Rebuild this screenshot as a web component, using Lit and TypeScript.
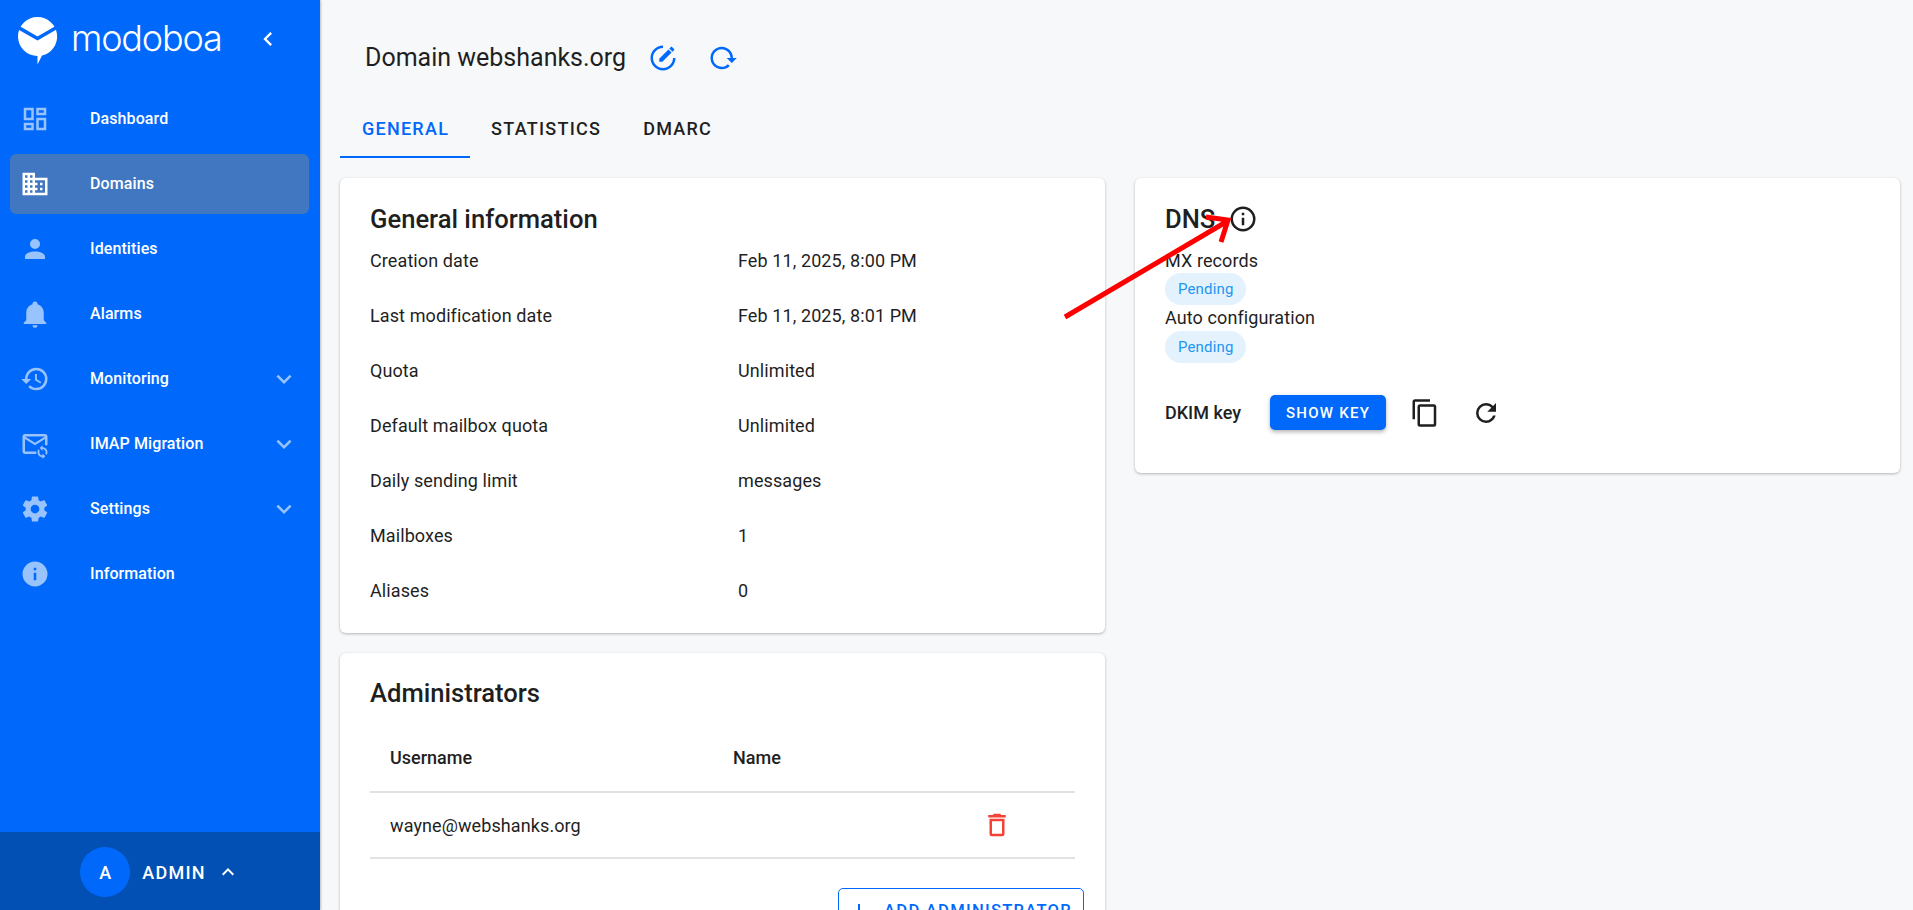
import { LitElement, css, html, svg } from 'lit'

const P = {
  dashboard: 'M19,5V7H15V5H19M9,5V11H5V5H9M19,13V19H15V13H19M9,17V19H5V17H9M21,3H13V9H21V3M11,3H3V13H11V3M21,11H13V21H21V11M11,15H3V21H11V15Z',
  domain: 'M18,15H16V17H18M18,11H16V13H18M20,19H12V17H14V15H12V13H14V11H12V9H20M10,7H8V5H10M10,11H8V9H10M10,15H8V13H10M10,19H8V17H10M6,7H4V5H6M6,11H4V9H6M6,15H4V13H6M6,19H4V17H6M12,7V3H2V21H22V7H12Z',
  account: 'M12,4A4,4 0 0,1 16,8A4,4 0 0,1 12,12A4,4 0 0,1 8,8A4,4 0 0,1 12,4M12,14C16.42,14 20,15.79 20,18V20H4V18C4,15.79 7.58,14 12,14Z',
  bell: 'M21,19V20H3V19L5,17V11C5,7.9 7.03,5.17 10,4.29C10,4.19 10,4.1 10,4A2,2 0 0,1 12,2A2,2 0 0,1 14,4C14,4.1 14,4.19 14,4.29C16.97,5.17 19,7.9 19,11V17L21,19M14,21A2,2 0 0,1 12,23A2,2 0 0,1 10,21',
  history: 'M13.5,8H12V13L16.28,15.54L17,14.33L13.5,12.25V8M13,3A9,9 0 0,0 4,12H1L4.96,16.03L9,12H6A7,7 0 0,1 13,5A7,7 0 0,1 20,12A7,7 0 0,1 13,19C11.07,19 9.32,18.21 8.06,16.94L6.64,18.36C8.27,20 10.5,21 13,21A9,9 0 0,0 22,12A9,9 0 0,0 13,3',
  emailSync: 'M22 6V13H20V8L12 13L4 8V18H13V20H4C2.9 20 2 19.1 2 18V6C2 4.9 2.9 4 4 4H20C21.1 4 22 4.9 22 6M20 6H4L12 11L20 6M18 14.5V13L15.75 15.25L18 17.5V16C19.38 16 20.5 17.12 20.5 18.5C20.5 18.9 20.41 19.28 20.24 19.62L21.33 20.71C21.75 20.08 22 19.32 22 18.5C22 16.29 20.21 14.5 18 14.5M18 21C16.62 21 15.5 19.88 15.5 18.5C15.5 18.1 15.59 17.72 15.76 17.38L14.67 16.29C14.25 16.92 14 17.68 14 18.5C14 20.71 15.79 22.5 18 22.5V24L20.25 21.75L18 19.5V21Z',
  cog: 'M12,15.5A3.5,3.5 0 0,1 8.5,12A3.5,3.5 0 0,1 12,8.5A3.5,3.5 0 0,1 15.5,12A3.5,3.5 0 0,1 12,15.5M19.43,12.97C19.47,12.65 19.5,12.33 19.5,12C19.5,11.67 19.47,11.34 19.43,11L21.54,9.37C21.73,9.22 21.78,8.95 21.66,8.73L19.66,5.27C19.54,5.05 19.27,4.96 19.05,5.05L16.56,6.05C16.04,5.66 15.5,5.32 14.87,5.07L14.5,2.42C14.46,2.18 14.25,2 14,2H10C9.75,2 9.54,2.18 9.5,2.42L9.13,5.07C8.5,5.32 7.96,5.66 7.44,6.05L4.95,5.05C4.73,4.96 4.46,5.05 4.34,5.27L2.34,8.73C2.21,8.95 2.27,9.22 2.46,9.37L4.57,11C4.53,11.34 4.5,11.67 4.5,12C4.5,12.33 4.53,12.65 4.57,12.97L2.46,14.63C2.27,14.78 2.21,15.05 2.34,15.27L4.34,18.73C4.46,18.95 4.73,19.03 4.95,18.95L7.44,17.94C7.96,18.34 8.5,18.68 9.13,18.93L9.5,21.58C9.54,21.82 9.75,22 10,22H14C14.25,22 14.46,21.82 14.5,21.58L14.87,18.93C15.5,18.67 16.04,18.34 16.56,17.94L19.05,18.95C19.27,19.03 19.54,18.95 19.66,18.73L21.66,15.27C21.78,15.05 21.73,14.78 21.54,14.63L19.43,12.97Z',
  info: 'M13,9H11V7H13M13,17H11V11H13M12,2A10,10 0 0,0 2,12A10,10 0 0,0 12,22A10,10 0 0,0 22,12A10,10 0 0,0 12,2Z',
  infoOutline: 'M11,9H13V7H11M12,20C7.59,20 4,16.41 4,12C4,7.59 7.59,4 12,4C16.41,4 20,7.59 20,12C20,16.41 16.41,20 12,20M12,2A10,10 0 0,0 2,12A10,10 0 0,0 12,22A10,10 0 0,0 22,12A10,10 0 0,0 12,2M11,17H13V11H11V17Z',
  down: 'M7.41,8.58L12,13.17L16.59,8.58L18,10L12,16L6,10L7.41,8.58Z',
  up: 'M7.41,15.41L12,10.83L16.59,15.41L18,14L12,8L6,14L7.41,15.41Z',
  left: 'M15.41,16.58L10.83,12L15.41,7.41L14,6L8,12L14,18L15.41,16.58Z',
  edit: 'M12 2C6.47 2 2 6.5 2 12C2 17.5 6.5 22 12 22S22 17.5 22 12H20C20 16.42 16.42 20 12 20C7.58 20 4 16.42 4 12C4 7.58 7.58 4 12 4V2M18.78 3C18.61 3 18.43 3.07 18.3 3.2L17.08 4.41L19.58 6.91L20.8 5.7C21.06 5.44 21.06 5 20.8 4.75L19.25 3.2C19.12 3.07 18.95 3 18.78 3M16.37 5.12L9 12.5V15H11.5L18.87 7.62L16.37 5.12Z',
  reload: 'M2 12C2 16.97 6.03 21 11 21C13.39 21 15.68 20.06 17.4 18.4L15.9 16.9C14.63 18.25 12.86 19 11 19C4.76 19 1.64 11.46 6.05 7.05C10.46 2.64 18 5.77 18 12H15L19 16H19.1L23 12H20C20 7.03 15.97 3 11 3C6.03 3 2 7.03 2 12Z',
  refresh: 'M17.65,6.35C16.2,4.9 14.21,4 12,4A8,8 0 0,0 4,12A8,8 0 0,0 12,20C15.73,20 18.84,17.45 19.73,14H17.65C16.83,16.33 14.61,18 12,18A6,6 0 0,1 6,12A6,6 0 0,1 12,6C13.66,6 15.14,6.69 16.22,7.78L13,11H20V4L17.65,6.35Z',
  copy: 'M19,21H8V7H19M19,5H8A2,2 0 0,0 6,7V21A2,2 0 0,0 8,23H19A2,2 0 0,0 21,21V7A2,2 0 0,0 19,5M16,1H4A2,2 0 0,0 2,3V17H4V3H16V1Z',
  trash: 'M6,19A2,2 0 0,0 8,21H16A2,2 0 0,0 18,19V7H6V19M8,9H16V19H8V9M15.5,4L14.5,3H9.5L8.5,4H5V6H19V4H15.5Z',
  plus: 'M19,13H13V19H11V13H5V11H11V5H13V11H19V13Z',
}

const icon = (d: string, size = 30) => html`
  <svg class="icon" width=${size} height=${size} viewBox="0 0 24 24">${svg`<path d=${d}></path>`}</svg>`

const navItems = [
  { label: 'Dashboard', path: P.dashboard },
  { label: 'Domains', path: P.domain, active: true },
  { label: 'Identities', path: P.account },
  { label: 'Alarms', path: P.bell },
  { label: 'Monitoring', path: P.history, more: true },
  { label: 'IMAP Migration', path: P.emailSync, more: true },
  { label: 'Settings', path: P.cog, more: true },
  { label: 'Information', path: P.info },
]

const infoRows = [
  ['Creation date', 'Feb 11, 2025, 8:00 PM'],
  ['Last modification date', 'Feb 11, 2025, 8:01 PM'],
  ['Quota', 'Unlimited'],
  ['Default mailbox quota', 'Unlimited'],
  ['Daily sending limit', 'messages'],
  ['Mailboxes', '1'],
  ['Aliases', '0'],
]

export class AppRoot extends LitElement {

  static styles = css`
    :host {
      display: flex;
      height: 100vh;
      overflow: hidden;
      position: relative;
      background: #f7f8fa;
      color: #1f1f1f;
      font-family: Roboto, "Liberation Sans", sans-serif;
      font-size: 18px;
      letter-spacing: 0.1px;
    }
    .icon {
      display: block;
      flex: none;
      fill: currentColor;
    }

    .sidebar {
      width: 320px;
      flex: none;
      display: flex;
      flex-direction: column;
      background: #0069fb;
      color: #fff;
      box-shadow: 1px 0 2px rgba(0, 0, 0, 0.25);
    }
    .brand {
      height: 80px;
      display: flex;
      align-items: center;
      flex: none;
    }
    .logo {
      margin-left: 16px;
      flex: none;
    }
    .wordmark {
      margin: -4px 0 0 11px;
      width: 183px;
      font-family: Inter, sans-serif;
      font-size: 36px;
      font-weight: 300;
      line-height: 48px;
      letter-spacing: -1.2px;
    }
    .collapse {
      color: #fff;
      margin-top: -2px;
    }
    nav {
      flex: 1;
      padding: 9px 11px 0 10px;
      display: flex;
      flex-direction: column;
      gap: 5px;
    }
    .item {
      height: 60px;
      display: flex;
      align-items: center;
      border-radius: 6px;
      padding: 0 10px;
      font-size: 16px;
      font-weight: 500;
    }
    .item.active {
      background: #4177c0;
    }
    .item .icon {
      color: rgba(255, 255, 255, 0.6);
    }
    .item.active .icon {
      color: #fff;
    }
    .item span {
      margin: -2px 0 0 40px;
      flex: 1;
    }
    .user {
      height: 78px;
      flex: none;
      box-sizing: border-box;
      padding-top: 2px;
      background: #0350b4;
      display: flex;
      align-items: center;
      justify-content: center;
    }
    .avatar {
      width: 50px;
      height: 50px;
      border-radius: 50%;
      background: #0069fb;
      display: flex;
      align-items: center;
      justify-content: center;
      font-weight: 500;
    }
    .user b {
      margin: 0 10px 0 12px;
      font-weight: 500;
      letter-spacing: 1.25px;
    }

    main {
      flex: 1;
      min-width: 0;
      padding: 0 13px 0 20px;
    }
    .head {
      height: 83px;
      padding: 16px 0 0 25px;
      display: flex;
      align-items: center;
      color: #0069fb;
    }
    h1 {
      margin: 0 22px 0 0;
      font-size: 25px;
      font-weight: 400;
      letter-spacing: 0;
      color: #1f1f1f;
    }
    .head .icon + .icon {
      margin-left: 30px;
    }
    .tabs {
      height: 59px;
      display: flex;
      font-weight: 500;
      letter-spacing: 1.25px;
    }
    .tab {
      padding: 0 21px;
      display: flex;
      align-items: center;
    }
    .tab.on {
      padding: 0 21px 0 22px;
      color: #0069fb;
      box-shadow: inset 0 -2px 0 #0069fb;
    }
    .columns {
      margin-top: 20px;
      display: grid;
      grid-template-columns: 765px 765px;
      column-gap: 30px;
      align-items: start;
    }
    .stack {
      display: flex;
      flex-direction: column;
      gap: 20px;
    }
    .card {
      background: #fff;
      border-radius: 6px;
      padding: 23px 30px 22px;
      box-shadow: 0 1px 3px rgba(0, 0, 0, 0.28);
    }
    .card.admins {
      padding-top: 22px;
    }
    h2 {
      margin: 0;
      font-size: 25.6px;
      font-weight: 500;
      line-height: 36px;
      letter-spacing: 0;
      display: flex;
      align-items: center;
    }
    .rows {
      display: grid;
      grid-template-columns: 368px 1fr;
      grid-auto-rows: 55px;
      align-items: center;
      margin-top: -4px;
      margin-bottom: -7px;
    }

    .admin-table {
      margin-top: 13px;
    }
    .tr {
      display: grid;
      grid-template-columns: 343px 1fr 93px;
      padding-left: 20px;
      align-items: center;
      border-bottom: 2px solid #e2e2e2;
    }
    .tr.th {
      height: 67px;
      font-weight: 500;
      letter-spacing: 0;
    }
    .tr.td {
      height: 64px;
    }
    .trash {
      color: #f44336;
    }
    .actions {
      display: flex;
      justify-content: flex-end;
      margin: 29px -9px 0 0;
    }
    .outline {
      height: 42px;
      padding: 0 11px 0 8px;
      border: 1px solid #0069fb;
      border-radius: 5px;
      color: #0069fb;
      font-size: 16.6px;
      font-weight: 500;
      letter-spacing: 1.25px;
      display: flex;
      align-items: center;
      gap: 13px;
    }
    .outline .icon {
      margin-top: 2px;
    }

    .dns {
      height: 295px;
      box-sizing: border-box;
    }
    .dns h2 .icon {
      margin-left: 13px;
    }
    .dns .label {
      line-height: 25px;
    }
    .dns .label.first {
      margin-top: 11px;
    }
    .chip {
      width: max-content;
      height: 32px;
      padding: 0 13px;
      border-radius: 16px;
      background: #e3f2fd;
      color: #2196f3;
      font-size: 15px;
      letter-spacing: 0.15px;
      display: flex;
      align-items: center;
    }
    .chip.second {
      margin-top: 1px;
    }
    .dkim {
      margin-top: 32px;
      display: flex;
      align-items: center;
      font-weight: 500;
      letter-spacing: 0;
    }
    .solid {
      margin-left: 29px;
      width: 116px;
      height: 35px;
      border-radius: 5px;
      background: #0069fb;
      color: #fff;
      font-size: 15px;
      font-weight: 500;
      letter-spacing: 1.25px;
      display: flex;
      align-items: center;
      justify-content: center;
      box-shadow: 0 2px 4px rgba(0, 0, 0, 0.3);
    }
    .dkim .copy {
      margin-left: 24px;
    }
    .dkim .refresh {
      margin-left: 31px;
    }

    .arrow {
      position: absolute;
      left: 0;
      top: 0;
      pointer-events: none;
    }
  `

  renderLogo() {
    return html`
      <svg class="logo" width="44" height="50" viewBox="16 15 44 50">
        ${svg`
          <path fill="#fff" d="M37.5 17A19.5 19.5 0 0 1 42 55.5L37.5 64.5L37.5 56A19.5 19.5 0 0 1 37.5 17Z"></path>
          <path fill="none" stroke="#0069fb" stroke-width="3.6" d="M15 25.5L37.5 38.5L60 25.5"></path>
        `}
      </svg>`
  }

  renderSidebar() {
    return html`
      <aside class="sidebar">
        <div class="brand">
          ${this.renderLogo()}
          <div class="wordmark">modoboa</div>
          <div class="collapse">${icon(P.left, 28)}</div>
        </div>
        <nav>
          ${navItems.map((item) => html`
            <div class="item ${item.active ? 'active' : ''}">
              ${icon(item.path)}
              <span>${item.label}</span>
              ${item.more ? icon(P.down, 30) : ''}
            </div>
          `)}
        </nav>
        <div class="user">
          <div class="avatar">A</div>
          <b>ADMIN</b>
          ${icon(P.up, 24)}
        </div>
      </aside>
    `
  }

  render() {
    return html`
      ${this.renderSidebar()}
      <main>
        <div class="head">
          <h1>Domain webshanks.org</h1>
          ${icon(P.edit)}
          ${icon(P.reload)}
        </div>
        <div class="tabs">
          <div class="tab on">GENERAL</div>
          <div class="tab">STATISTICS</div>
          <div class="tab">DMARC</div>
        </div>
        <div class="columns">
          <div class="stack">
            <section class="card">
              <h2>General information</h2>
              <div class="rows">
                ${infoRows.map(([key, value]) => html`<div>${key}</div><div>${value}</div>`)}
              </div>
            </section>
            <section class="card admins">
              <h2>Administrators</h2>
              <div class="admin-table">
                <div class="tr th"><div>Username</div><div>Name</div><div></div></div>
                <div class="tr td">
                  <div>wayne@webshanks.org</div>
                  <div></div>
                  <div class="trash">${icon(P.trash)}</div>
                </div>
              </div>
              <div class="actions"><div class="outline">${icon(P.plus, 24)}ADD ADMINISTRATOR</div></div>
            </section>
          </div>
          <section class="card dns">
            <h2>DNS ${icon(P.infoOutline)}</h2>
            <div class="label first">MX records</div>
            <div class="chip">Pending</div>
            <div class="label">Auto configuration</div>
            <div class="chip second">Pending</div>
            <div class="dkim">
              <span>DKIM key</span>
              <div class="solid">SHOW KEY</div>
              <div class="copy">${icon(P.copy)}</div>
              <div class="refresh">${icon(P.refresh)}</div>
            </div>
          </section>
        </div>
      </main>
      <svg class="arrow" width="1913" height="910">
        ${svg`<path fill="none" stroke="#ff0000" stroke-width="5" d="M1065 317L1226 222M1206 217L1228 220L1221 242"></path>`}
      </svg>
    `
  }
}

window.customElements.define('app-root', AppRoot)
